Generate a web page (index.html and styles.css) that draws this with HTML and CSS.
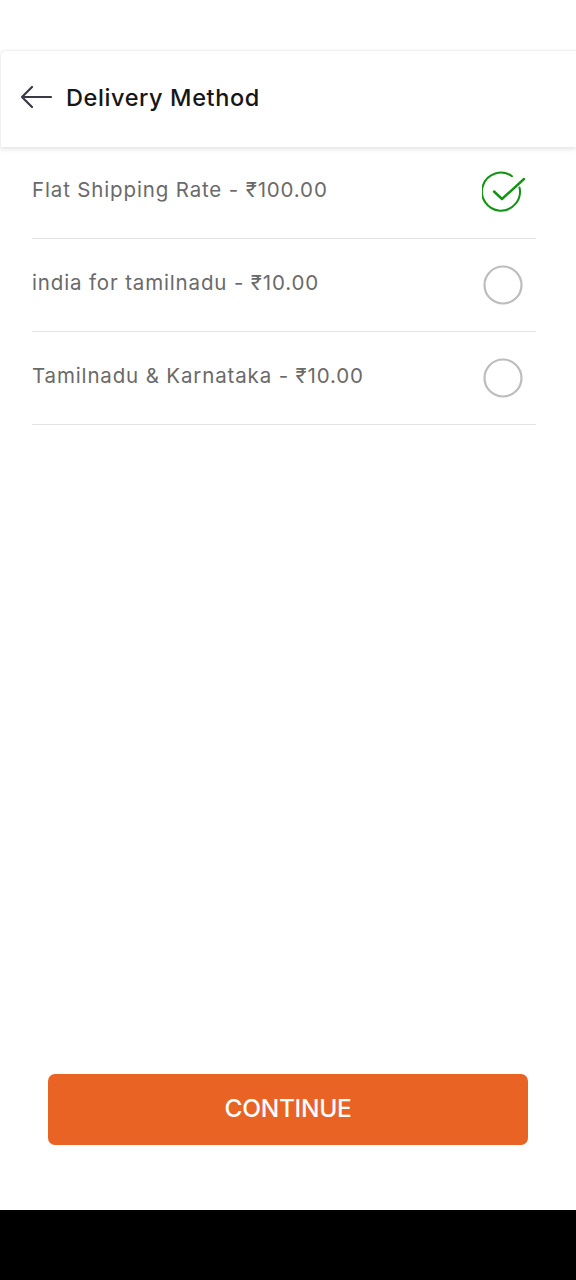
FILE: index.html
```html
<!DOCTYPE html>
<html lang="en">
<head>
  <meta charset="UTF-8" />
  <meta name="viewport" content="width=device-width, initial-scale=1.0"/>
  <title>Delivery Method</title>
  <link rel="stylesheet" href="styles.css">
</head>
<body>
  <div class="screen">
    <div class="status"></div>

    <header class="topbar">
      <svg class="back" width="32" height="24" viewBox="0 0 32 24">
        <path d="M31 12H2M12 2L2 12l10 10" fill="none" stroke="#3a3a44" stroke-width="2.2" stroke-linecap="round" stroke-linejoin="round"/>
      </svg>
      <h1>Delivery Method</h1>
    </header>

    <ul class="methods">
      <li class="method">
        <span>Flat Shipping Rate - ₹100.00</span>
        <svg class="radio" width="44" height="44" viewBox="0 0 44 44">
          <path d="M37.5 16.5A19 19 0 1 1 30 5.2" fill="none" stroke="#129412" stroke-width="2" stroke-linecap="round"/>
          <path d="M12 20.5l8 7.5L42 8" fill="none" stroke="#129412" stroke-width="2.4" stroke-linecap="round" stroke-linejoin="round"/>
        </svg>
      </li>
      <li class="method">
        <span>india for tamilnadu - ₹10.00</span>
        <svg class="radio" width="44" height="44" viewBox="0 0 44 44">
          <circle cx="21" cy="22" r="18.5" fill="none" stroke="#bdbdbd" stroke-width="2.2"/>
        </svg>
      </li>
      <li class="method">
        <span>Tamilnadu &amp; Karnataka - ₹10.00</span>
        <svg class="radio" width="44" height="44" viewBox="0 0 44 44">
          <circle cx="21" cy="22" r="18.5" fill="none" stroke="#bdbdbd" stroke-width="2.2"/>
        </svg>
      </li>
    </ul>

    <div class="footer">
      <button class="continue">CONTINUE</button>
    </div>

    <div class="navbar"></div>
  </div>
</body>
</html>
```

FILE: styles.css
```css
body {
  margin: 0;
  padding: 0;
  background: #fff;
  font-family: Inter, "Noto Sans", sans-serif;
}

.screen {
  height: 1280px;
  display: flex;
  flex-direction: column;
}

.status {
  height: 50px;
}

.topbar {
  height: 97px;
  display: flex;
  align-items: center;
  gap: 14px;
  padding: 0 0 4px 19px;
  border-top: 1px solid #f0f0f0;
  border-left: 1px solid #f0f0f0;
  border-radius: 6px 0 0 0;
  box-shadow: 0 2px 5px rgba(0, 0, 0, 0.12);
  box-sizing: border-box;
  position: relative;
}

.topbar h1 {
  margin: 0;
  font-size: 23.5px;
  font-weight: 500;
  letter-spacing: 0.6px;
  color: #161616;
}

.back {
  display: block;
}

.methods {
  list-style: none;
  margin: 0;
  padding: 0 40px 0 32px;
}

.method {
  height: 92px;
  display: flex;
  align-items: center;
  justify-content: space-between;
  border-bottom: 1px solid #e2e2e2;
  font-size: 20.5px;
  color: #6a6a6a;
  letter-spacing: 0.85px;
}

.method:first-child {
  height: 91px;
}

.method span {
  margin-top: -6px;
}

.radio {
  display: block;
  margin-right: 10px;
}

.footer {
  flex: 1;
  display: flex;
  align-items: flex-end;
  padding: 0 48px 65px;
}

.continue {
  width: 100%;
  height: 71px;
  padding-bottom: 4px;
  border: none;
  border-radius: 7px;
  background: #e96325;
  color: #fff;
  font-family: Inter, "Noto Sans", sans-serif;
  font-size: 24.5px;
  font-weight: 500;
  letter-spacing: -0.3px;
}

.navbar {
  height: 70px;
  background: #000;
}
```
